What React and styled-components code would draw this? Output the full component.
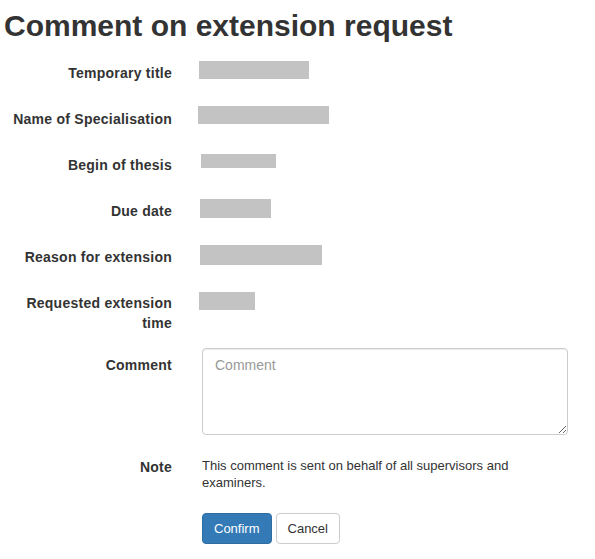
import React from "react";
import styled, { createGlobalStyle } from "styled-components";

const Global = createGlobalStyle`
  html, body { margin: 0; padding: 0; background: #fff; }
  body {
    font-family: "Liberation Sans", Arial, Helvetica, sans-serif;
    font-size: 14px;
    line-height: 20px;
    color: #333;
  }
  * { box-sizing: border-box; }
`;

const Page = styled.div`
  padding: 9px 0 0 4px;
`;

const Title = styled.h1`
  margin: 0 0 14px 0;
  font-size: 30px;
  line-height: 33px;
  font-weight: 700;
  color: #333;
`;

const Form = styled.form`
  display: grid;
  grid-template-columns: 168px 366px;
  column-gap: 30px;
  row-gap: 15px;
  margin: 0;
`;

const Label = styled.label`
  padding-top: 7px;
  font-weight: 700;
  font-size: 14px;
  line-height: 20px;
  letter-spacing: 0.25px;
  text-align: right;
  min-height: 31px;
`;

const Value = styled.div`
  min-height: 31px;
`;

const Redacted = styled.div`
  background: #c3c3c3;
  width: ${(p) => p.$w}px;
  height: ${(p) => p.$h}px;
  margin-top: ${(p) => p.$top}px;
  margin-left: ${(p) => p.$left}px;
`;

const TextArea = styled.textarea`
  display: block;
  width: 366px;
  height: 87px;
  padding: 6px 12px;
  font-family: inherit;
  font-size: 14px;
  line-height: 20px;
  color: #555;
  border: 1px solid #ccc;
  border-radius: 4px;
  box-shadow: inset 0 1px 1px rgba(0, 0, 0, 0.075);
  resize: vertical;
  &::placeholder { color: #999; }
`;

const Note = styled.p`
  margin: 0;
  padding: 7px 0;
  max-width: 340px;
  font-size: 13px;
  line-height: 17px;
  color: #333;
`;

const Actions = styled.div`
  grid-column: 2;
  display: flex;
  gap: 4px;
`;

const Button = styled.button`
  font-family: inherit;
  font-size: 13px;
  line-height: 17px;
  padding: 6px 11px;
  border-radius: 4px;
  cursor: pointer;
  border: 1px solid ${(p) => (p.$primary ? "#2e6da4" : "#ccc")};
  background: ${(p) => (p.$primary ? "#337ab7" : "#fff")};
  color: ${(p) => (p.$primary ? "#fff" : "#333")};
`;

const rows = [
  { label: "Temporary title", w: 110, h: 18, top: 5, left: -3 },
  { label: "Name of Specialisation", w: 131, h: 18, top: 4, left: -4 },
  { label: "Begin of thesis", w: 75, h: 14, top: 6, left: -1 },
  { label: "Due date", w: 71, h: 19, top: 5, left: -2 },
  { label: "Reason for extension", w: 122, h: 20, top: 5, left: -2 },
  { label: "Requested extension time", w: 56, h: 18, top: 6, left: -3 },
];

export default function App() {
  return (
    <Page>
      <Global />
      <Title>Comment on extension request</Title>
      <Form onSubmit={(e) => e.preventDefault()}>
        {rows.map((r) => (
          <React.Fragment key={r.label}>
            <Label>{r.label}</Label>
            <Value>
              <Redacted $w={r.w} $h={r.h} $top={r.top} $left={r.left} />
            </Value>
          </React.Fragment>
        ))}
        <Label htmlFor="comment">Comment</Label>
        <TextArea id="comment" placeholder="Comment" />
        <Label>Note</Label>
        <Note>This comment is sent on behalf of all supervisors and examiners.</Note>
        <Actions>
          <Button type="submit" $primary>Confirm</Button>
          <Button type="button">Cancel</Button>
        </Actions>
      </Form>
    </Page>
  );
}
